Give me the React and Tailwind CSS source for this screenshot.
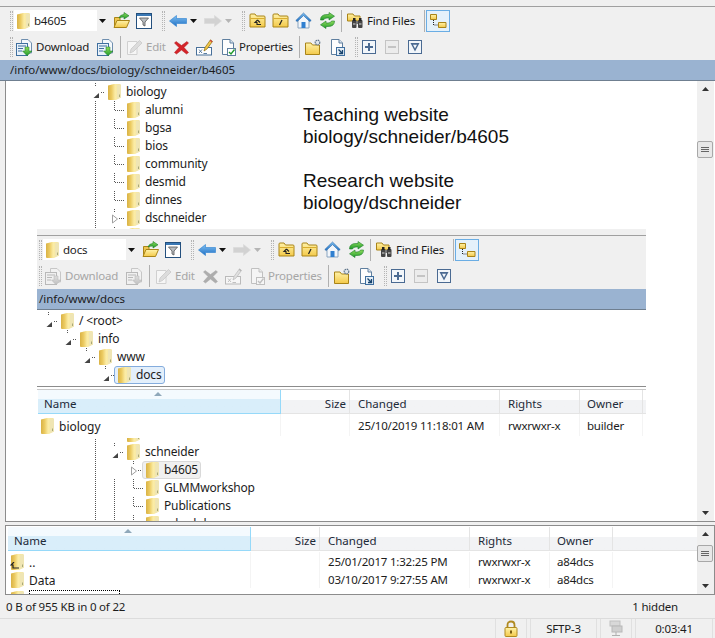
import React from 'react';

// shared gradients, referenced by url(#id) from the icons below
function Defs() {
  return (
    <svg className="absolute w-0 h-0">
      <defs>
        <linearGradient id="fld" x1="0" x2="1" y1="0" y2="0">
          <stop offset="0" stopColor="#d9b245" />
          <stop offset="0.28" stopColor="#eccb62" />
          <stop offset="0.55" stopColor="#fbeca6" />
          <stop offset="1" stopColor="#f3e3a0" />
        </linearGradient>
        <linearGradient id="ylw" x1="0" x2="0" y1="0" y2="1">
          <stop offset="0" stopColor="#fff2a8" />
          <stop offset="1" stopColor="#f3c94a" />
        </linearGradient>
        <linearGradient id="grn" x1="0" x2="0" y1="0" y2="1">
          <stop offset="0" stopColor="#8fdc5c" />
          <stop offset="1" stopColor="#1f9a2c" />
        </linearGradient>
        <linearGradient id="blu" x1="0" x2="0" y1="0" y2="1">
          <stop offset="0" stopColor="#7fc0f2" />
          <stop offset="1" stopColor="#1f6fc4" />
        </linearGradient>
      </defs>
    </svg>
  );
}

function Folder({ className = '' }) {
  return (
    <svg width="15" height="18" viewBox="0 0 15 18" className={'shrink-0 ' + className}>
      <path d="M1 2.5 L7 1 H12.5 Q14 1 14 2.5 V14 Q14 15 13 15 L9 17 H2 Q1 17 1 16 Z" fill="url(#fld)" />
      <path d="M10 2 V16 L14 14.5 V2.5 Q14 1.6 13 1.6 Z" fill="#efe5b4" />
      <path d="M12.5 11.5 v2.5" stroke="#a9a878" strokeWidth="1" />
    </svg>
  );
}

function Grip({ className = '' }) {
  return <div className={'w-[3px] h-[20px] shrink-0 border-x border-dotted border-[#b4b4b4] ' + className} />;
}

function Sep({ className = '' }) {
  return <div className={'w-px h-[22px] shrink-0 bg-[#b0b0b0] ' + className} />;
}

function Caret({ color = '#111', className = '' }) {
  return (
    <svg width="7" height="4" viewBox="0 0 7 4" className={'shrink-0 ' + className}>
      <path d="M0 0 H7 L3.5 4 Z" fill={color} />
    </svg>
  );
}

function Ico({ w = 17, h = 17, className = '', children }) {
  return (
    <svg width={w} height={h} viewBox={`0 0 ${w} ${h}`} className={'shrink-0 ' + className}>
      {children}
    </svg>
  );
}

const IconOpen = ({ className }) => (
  <Ico className={className}>
    <path d="M1.5 5.5 H7 V15.5 H1.5 Z" fill="#eec64e" stroke="#a98418" />
    <path d="M1 15.5 L4 8.5 H16.5 L13.5 15.5 Z" fill="url(#ylw)" stroke="#a98418" />
    <path d="M6 6 Q7 2.5 11 2.5 V0.5 L16 3.8 L11 7 V5 Q8 5 6 6 Z" fill="url(#grn)" stroke="#1b7d28" strokeWidth="0.6" />
  </Ico>
);

const IconFilter = ({ className }) => (
  <Ico h={16} w={16} className={className}>
    <rect x="0.5" y="0.5" width="15" height="15" fill="#fff" stroke="#24507e" />
    <rect x="1" y="1" width="14" height="2" fill="#3a78b4" />
    <path d="M3.5 5 H12.5 L9 9 V13 L7 12 V9 Z" fill="#b8bcc0" stroke="#555" strokeWidth="0.8" />
  </Ico>
);

const IconArrow = ({ dir = 'left', grey, className }) => (
  <Ico w={18} h={12} className={className}>
    <path
      d={dir === 'left' ? 'M0.5 6 L7.5 0.5 V3.5 H17.5 V8.5 H7.5 V11.5 Z' : 'M17.5 6 L10.5 0.5 V3.5 H0.5 V8.5 H10.5 V11.5 Z'}
      fill={grey ? '#d2d2d2' : 'url(#blu)'}
      stroke={grey ? '#d8d8d8' : '#2a7fd0'}
      strokeWidth="0.6"
    />
  </Ico>
);

const FolderBox = ({ children, className }) => (
  <Ico className={className}>
    <path d="M1 3 Q1 2 2 2 H6 L7.5 4 H15 Q16 4 16 5 V15 H1 Z" fill="url(#ylw)" stroke="#a98418" />
    <path d="M1.5 6.5 H15.5" stroke="#d9ad2e" strokeWidth="1" />
    {children}
  </Ico>
);

const IconFolderUp = ({ className }) => (
  <FolderBox className={className}>
    <path d="M8.5 8 L6 10.5 H8 V12.5 H12 M8.5 8 L11 10.5" fill="none" stroke="#222" strokeWidth="1.1" />
  </FolderBox>
);

const IconFolderRoot = ({ className }) => (
  <FolderBox className={className}>
    <path d="M10 8 L7.5 13" stroke="#222" strokeWidth="1.2" />
  </FolderBox>
);

const IconHome = ({ className }) => (
  <Ico className={className}>
    <path d="M3 8 V16 H14 V8 L8.5 3 Z" fill="#f2f6fb" stroke="#8aa5c0" />
    <rect x="6.5" y="10" width="4" height="6" fill="#2f7fd0" />
    <path d="M0.8 8.5 L8.5 1 L16.2 8.5 L14.8 9.6 L8.5 3.6 L2.2 9.6 Z" fill="url(#blu)" stroke="#2a6aa8" strokeWidth="0.6" />
  </Ico>
);

const IconRefresh = ({ className }) => (
  <Ico className={className}>
    <path d="M1.5 8 Q1.5 2.5 8 2.5 H10 V0.5 L15.5 4.2 L10 8 V6 H8 Q5 6 4.5 8 Z" fill="url(#grn)" stroke="#1b7d28" strokeWidth="0.6" />
    <path d="M15.5 9 Q15.5 14.5 9 14.5 H7 V16.5 L1.5 12.8 L7 9 V11 H9 Q12 11 12.5 9 Z" fill="url(#grn)" stroke="#1b7d28" strokeWidth="0.6" />
  </Ico>
);

const IconFind = ({ className }) => (
  <Ico className={className}>
    <path d="M0.5 2 H6 L7.5 4 H13 V9 H0.5 Z" fill="url(#ylw)" stroke="#a98418" />
    <rect x="5" y="8" width="4.5" height="8" rx="1" fill="#444" />
    <rect x="11" y="8" width="4.5" height="8" rx="1" fill="#444" />
    <rect x="6" y="6" width="2.5" height="3" fill="#222" />
    <rect x="12" y="6" width="2.5" height="3" fill="#222" />
    <rect x="9" y="9" width="2" height="3" fill="#777" />
    <path d="M6 12 h2.5 M12 12 h2.5" stroke="#ddd" strokeWidth="1" />
  </Ico>
);

const IconTreeToggle = () => (
  <div className="ml-px w-[24px] h-[22px] shrink-0 flex items-center justify-center border border-[#6aade4] bg-[#e4f1fb]">
    <Ico w={18} h={16}>
      <path d="M1.5 1.5 H7.5 V6.5 H1.5 Z" fill="url(#ylw)" stroke="#a98418" />
      <path d="M9.5 9.5 H17 V14.5 H9.5 Z" fill="url(#ylw)" stroke="#a98418" />
      <path d="M4.5 7 V12 H9" fill="none" stroke="#222" strokeDasharray="1 1" />
    </Ico>
  </div>
);

const Doc = ({ children, className }) => (
  <Ico className={className}>
    <path d="M3.5 0.5 H11 L14.5 4 V15.5 H3.5 Z" fill="#fdfdfd" stroke="#5f7f9f" />
    <path d="M11 0.5 V4 H14.5" fill="#dbe6f0" stroke="#5f7f9f" />
    {children}
  </Ico>
);

const IconDownload = ({ className }) => (
  <Ico className={className}>
    <path d="M5.5 0.5 H12 L15.5 4 V14 H5.5 Z" fill="#f4f8fc" stroke="#6f8faf" />
    <rect x="0.5" y="4.5" width="11" height="12" fill="#e9f2fa" stroke="#3f6f9f" />
    <path d="M2 7 H10 M2 9.5 H7 M2 12 H6" stroke="#3f6f9f" strokeWidth="1" />
    <path d="M9 8 H13 V12 H16 L11 16.8 L6.5 12 H9 Z" fill="url(#grn)" stroke="#1b7d28" strokeWidth="0.5" />
  </Ico>
);

const IconEdit = ({ className }) => (
  <Ico className={className}>
    <path d="M1.5 2.5 H11 V15.5 H1.5 Z" fill="#f6f6f6" stroke="#d0d0d0" />
    <path d="M4 14 L5 10 L13.5 1.5 L16 4 L7.5 12.5 Z" fill="#dcdcdc" stroke="#c4c4c4" strokeWidth="0.7" />
  </Ico>
);

const IconDelete = ({ className }) => (
  <Ico w={15} h={15} className={className}>
    <path d="M2 1.5 L7.5 5.5 L13 1.5 L14.5 3 L10 7.5 L14.5 12.5 L12.5 14 L7.5 10 L2.5 14 L0.5 12.5 L5 7.5 L0.5 3 Z" fill="#d4242a" stroke="#b01a1e" strokeWidth="0.5" />
  </Ico>
);

const IconRename = ({ className }) => (
  <Ico className={className}>
    <rect x="0.5" y="8.5" width="15" height="7.5" fill="#fff" stroke="#48709a" />
    <path d="M3 10.5 L6 14 M6 10.5 L3 14 M7.5 14.5 H11" stroke="#48709a" strokeWidth="0.9" />
    <path d="M8 12 L9 8.5 L14.5 0.8 L16.5 2.4 L11 10 Z" fill="#f3c94a" stroke="#8a6a10" strokeWidth="0.7" />
    <path d="M13.8 1.8 L15.8 3.4 L16.5 2.4 L14.5 0.8 Z" fill="#d04040" />
  </Ico>
);

const IconProps = ({ className }) => (
  <Doc className={className}>
    <rect x="8.5" y="9.5" width="8" height="7" fill="#fff" stroke="#5f7f9f" />
    <path d="M10 13 L12 15 L15.5 10.5" fill="none" stroke="#1f9a2c" strokeWidth="1.4" />
  </Doc>
);

const IconNewDir = ({ className }) => (
  <Ico className={className}>
    <path d="M0.5 4 H6 L7.5 6 H14.5 V15.5 H0.5 Z" fill="url(#ylw)" stroke="#a98418" />
    <circle cx="12.5" cy="3.5" r="2.3" fill="#dfe6ec" stroke="#61768a" strokeWidth="1.2" strokeDasharray="1.4 0.6" />
  </Ico>
);

const IconDocGo = ({ className }) => (
  <Doc className={className}>
    <rect x="8.5" y="8.5" width="8" height="8" fill="#e5eef6" stroke="#3f6f9f" />
    <path d="M10.5 10.5 L14.5 14.5 M14.5 11 V14.5 H11" fill="none" stroke="#16436e" strokeWidth="1.3" />
  </Doc>
);

function BoxIcon({ type, grey, className = '' }) {
  const c = grey ? '#c4c4c4' : '#4a6a92';
  return (
    <Ico w={14} h={14} className={className}>
      <rect x="0.5" y="0.5" width="13" height="13" fill={grey ? '#ececec' : '#f2f6fa'} stroke={c} />
      {type === 'plus' && <path d="M7 3 V11 M3 7 H11" stroke={c} strokeWidth="2" />}
      {type === 'minus' && <path d="M3 7 H11" stroke={c} strokeWidth="2" />}
      {type === 'down' && <path d="M2.5 3 H11.5 L7 11.5 Z M5 4.8 L7 8.6 L9 4.8 Z" fill={c} fillRule="evenodd" />}
    </Ico>
  );
}

function Label({ className = '', children }) {
  return <span className={'shrink-0 whitespace-nowrap text-[11.5px] tracking-[-0.2px] ' + className}>{children}</span>;
}

// the two toolbars and the path bar, used by the main window and the pasted one
function Header({ combo, path, off }) {
  const fade = off ? 'grayscale opacity-40' : '';
  const offText = off ? 'text-[#a6a6a6]' : '';
  return (
    <div className="bg-[#f0f0f0] pt-[6px]">
      <div className="border-t border-[#a0a0a0] h-[27px] flex items-center pl-[10px] pt-px">
        <Grip />
        <div className="ml-px w-[94px] h-[21px] bg-white flex items-center shrink-0">
          <Folder className="ml-[2px]" />
          <Label className="ml-[3px] flex-1 shrink">{combo}</Label>
          <div className="w-[11px] h-full bg-[#f0f0f0] flex items-center justify-center">
            <Caret />
          </div>
        </div>
        <IconOpen className="ml-[5px]" />
        <IconFilter className="ml-[6px]" />
        <Grip className="ml-[10px]" />
        <IconArrow className="ml-[4px]" />
        <Caret className="ml-[3px]" />
        <IconArrow dir="right" grey className="ml-[7px]" />
        <Caret color="#b5b5b5" className="ml-[3px]" />
        <Grip className="ml-[10px]" />
        <IconFolderUp className="ml-[4px]" />
        <IconFolderRoot className="ml-[6px]" />
        <IconHome className="ml-[6px]" />
        <IconRefresh className="ml-[7px]" />
        <Sep className="ml-[5px]" />
        <IconFind className="ml-[5px]" />
        <Label className="ml-[3px] w-[49px]">Find Files</Label>
        <Sep className="ml-[8px]" />
        <IconTreeToggle />
      </div>
      <div className="h-[27px] flex items-center pl-[10px] pt-px">
        <Grip />
        <IconDownload className={'ml-[3px] ' + fade} />
        <Label className={'ml-[3px] w-[54px] ' + offText}>Download</Label>
        <IconDownload className={'ml-[7px] ' + fade} />
        <Sep className="ml-[6px]" />
        <IconEdit className="ml-[5px]" />
        <Label className="ml-[3px] w-[20px] text-[#a6a6a6]">Edit</Label>
        <IconDelete className={'ml-[8px] ' + fade} />
        <IconRename className={'ml-[7px] ' + fade} />
        <IconProps className={'ml-[6px] ' + fade} />
        <Label className={'ml-[3px] w-[53px] ' + offText}>Properties</Label>
        <Sep className="ml-[7px]" />
        <IconNewDir className="ml-[5px]" />
        <IconDocGo className="ml-[6px]" />
        <Grip className="ml-[10px]" />
        <BoxIcon type="plus" className="ml-[4px]" />
        <BoxIcon type="minus" grey className="ml-[9px]" />
        <BoxIcon type="down" className="ml-[9px]" />
      </div>
      <div className="h-[21px] bg-[#9ab3d1] border-b border-[#6f7f90] pl-[10px] flex items-center text-[11.5px]">{path}</div>
    </div>
  );
}

// one 19x18 cell of tree lines: line = pass-through guide, mark = open/closed/dash
function TreeCell({ line, mark }) {
  return (
    <svg width="19" height="18" viewBox="0 0 19 18" className="shrink-0">
      {line && <path d="M9.5 0 V18" stroke="#555" strokeDasharray="1 1" />}
      {mark === 'dash' && <path d="M9.5 0 V9.5 H19" stroke="#555" strokeDasharray="1 1" fill="none" />}
      {mark === 'open' && (
        <>
          <path d="M9.5 0 V4" stroke="#555" strokeDasharray="1 1" />
          <path d="M13 10 V15 H7.5 Z" fill="#444" />
          <path d="M15 9.5 H19" stroke="#555" strokeDasharray="1 1" />
        </>
      )}
      {mark === 'closed' && (
        <>
          <path d="M9.5 0 V4" stroke="#555" strokeDasharray="1 1" />
          <path d="M7.5 6 L12.5 10 L7.5 14 Z" fill="#fff" stroke="#a0a0a0" />
          <path d="M14 9.5 H19" stroke="#555" strokeDasharray="1 1" />
        </>
      )}
    </svg>
  );
}

function TreeRow({ lines = [], mark, label, box }) {
  const boxCls = box === 'blue'
    ? 'border-[#84acdd] bg-[#e3effb]'
    : box === 'grey'
      ? 'border-[#d9d9d9] bg-[#f0f0f0]'
      : 'border-transparent';
  return (
    <div className="h-[18px] flex items-center">
      {lines.map((on, i) => (
        <TreeCell key={i} line={on} />
      ))}
      <TreeCell mark={mark} />
      <div className={'h-[18px] flex items-center pl-[2px] pr-[2px] -ml-px rounded-[3px] border ' + boxCls}>
        <Folder />
        {label && <span className="ml-[4px] whitespace-nowrap tracking-[-0.15px]">{label}</span>}
      </div>
    </div>
  );
}

const hiddenRows = Array.from({ length: 12 }, (_, i) => i);

function Tree() {
  return (
    <div className="pl-[80px] pt-[2px]">
      <TreeRow mark="open" label="biology" />
      {['alumni', 'bgsa', 'bios', 'community', 'desmid', 'dinnes'].map((n) => (
        <TreeRow key={n} lines={[true]} mark="dash" label={n} />
      ))}
      <TreeRow lines={[true]} mark="closed" label="dschneider" />
      {hiddenRows.map((i) => (
        <TreeRow key={i} lines={[true]} mark="dash" />
      ))}
      <TreeRow lines={[true]} mark="open" label="schneider" />
      <TreeRow lines={[true, false]} mark="closed" label="b4605" box="grey" />
      <TreeRow lines={[true, true]} mark="dash" label="GLMMworkshop" />
      <TreeRow lines={[true, true]} mark="dash" label="Publications" />
      <TreeRow lines={[true, true]} mark="dash" label="schedule" />
    </div>
  );
}

function Scrollbar({ thumbTop, className = '' }) {
  return (
    <div className={'w-[17px] shrink-0 bg-[#f0f0f0] flex flex-col items-center justify-between py-[6px] relative ' + className}>
      <Caret color="#333" className="rotate-180" />
      <div className={'absolute left-0 w-[16px] h-[17px] rounded-[2px] border border-[#a8a8a8] bg-[#e8e8e8] flex flex-col items-center justify-center gap-[1px] ' + thumbTop}>
        <div className="w-[8px] h-px bg-[#666]" />
        <div className="w-[8px] h-px bg-[#666]" />
        <div className="w-[8px] h-px bg-[#666]" />
      </div>
      <Caret color="#333" />
    </div>
  );
}

const gridCols = 'grid grid-cols-[243px_69px_150px_80px_63px_1fr]';

function ListHead() {
  const cell = 'h-[24px] border-r border-b border-r-[#e4e4e4] border-b-[#e4e4e4] bg-gradient-to-b from-white from-45% to-[#f2f3f5] to-45% flex items-center';
  return (
    <div className={gridCols + ' text-[#1d2a38] text-[11.5px]'}>
      <div className="h-[24px] relative border-r border-b border-[#96d9f9] bg-gradient-to-b from-[#f4fafe] from-40% to-[#d9eefa] to-40% flex items-center pl-[6px]">
        <span className="mt-[4px]">Name</span>
        <svg width="8" height="4" viewBox="0 0 8 4" className="absolute left-[116px] top-[2px]">
          <path d="M4 0 L8 4 H0 Z" fill="#8fa8ba" />
        </svg>
      </div>
      <div className={cell + ' justify-end pr-[3px]'}><span className="mt-[4px]">Size</span></div>
      <div className={cell + ' pl-[8px]'}><span className="mt-[4px]">Changed</span></div>
      <div className={cell + ' pl-[8px]'}><span className="mt-[4px]">Rights</span></div>
      <div className={cell + ' pl-[7px]'}><span className="mt-[4px]">Owner</span></div>
      <div className={cell + ' border-r-0'} />
    </div>
  );
}

function ListRow({ name, up, date, owner, h = 'h-[18px]' }) {
  const cell = h + ' border-r border-[#f4f4f4] flex items-center whitespace-nowrap pt-[2px]';
  return (
    <div className={gridCols + ' text-[11.5px] tracking-[-0.2px]'}>
      <div className={cell + ' pl-[2px] pt-0'}>
        <div className="relative shrink-0">
          <Folder />
          {up && (
            <svg width="9" height="8" viewBox="0 0 9 8" className="absolute left-0 bottom-[1px]">
              <path d="M4 0 L1 3 H3 V6 H9" fill="none" stroke="#222" strokeWidth="1.2" />
            </svg>
          )}
        </div>
        <span className="ml-[4px] mt-[2px] text-[12px] tracking-normal">{name}</span>
      </div>
      <div className={cell} />
      <div className={cell + ' pl-[8px]'}>{date}</div>
      <div className={cell + ' pl-[8px]'}>rwxrwxr-x</div>
      <div className={cell + ' pl-[7px]'}>{owner}</div>
      <div className={h} />
    </div>
  );
}

// the screenshot pasted over the tree in the reference
function PastedWindow() {
  return (
    <div className="absolute left-[31px] top-[148px] w-[609px] h-[209px] overflow-hidden bg-white">
      <div className="w-[715px] -ml-[8px]">
        <Header combo="docs" path="/info/www/docs" off />
      </div>
      <div className="h-[76px] pl-[2px] pt-[2px]">
        <TreeRow mark="open" label="/ <root>" />
        <TreeRow lines={[false]} mark="open" label="info" />
        <TreeRow lines={[false, false]} mark="open" label="www" />
        <TreeRow lines={[false, false, false]} mark="open" label="docs" box="blue" />
      </div>
      <div className="border-t border-[#8c8c8c] h-[3px] bg-white" />
      <div className="border-t border-[#c8c8c8] pl-px">
        <ListHead />
        <ListRow name="biology" date="25/10/2019 11:18:01 AM" owner="builder" h="h-[22px]" />
      </div>
    </div>
  );
}

export default function App() {
  return (
    <div className="w-[715px] h-[638px] overflow-hidden bg-[#f0f0f0] text-[12px] leading-[16px] text-[#1c1c1c] font-['Noto_Sans',sans-serif]">
      <Defs />
      <Header combo="b4605" path="/info/www/docs/biology/schneider/b4605" />

      <div className="h-[441px] ml-[5px] flex border-l border-b border-[#8c8c8c] bg-white relative overflow-hidden">
        <div className="flex-1 overflow-hidden">
          <Tree />
        </div>
        <Scrollbar thumbTop="top-[60px]" className="mr-px" />
        <div className="absolute left-[297px] top-[23px] text-[19px] leading-[22px] text-[#111] font-['Liberation_Sans',sans-serif]">
          <p>Teaching website</p>
          <p>biology/schneider/b4605</p>
          <p className="mt-[22px]">Research website</p>
          <p>biology/dschneider</p>
        </div>
        <PastedWindow />
      </div>

      <div className="mt-[3px] ml-[5px] h-[70px] flex border border-[#8c8c8c] bg-white pl-[2px] overflow-hidden">
        <div className="flex-1 overflow-hidden pt-px">
          <ListHead />
          <div className="pt-px">
            <ListRow name=".." up date="25/01/2017 1:32:25 PM" owner="a84dcs" />
            <ListRow name="Data" date="03/10/2017 9:27:55 AM" owner="a84dcs" />
            <div className="h-[18px] mt-[2px] flex items-start pl-[2px]">
              <Folder />
              <div className="ml-[4px] w-[91px] h-[18px] border border-dotted border-black" />
            </div>
          </div>
        </div>
        <Scrollbar thumbTop="top-[19px]" />
      </div>

      <div className="h-[23px] flex items-center justify-between pl-[6px] pr-[37px] text-[11.5px] tracking-[-0.2px]">
        <span>0 B of 955 KB in 0 of 22</span>
        <span>1 hidden</span>
      </div>
      <div className="h-[20px] border-t border-[#dcdcdc] flex justify-end pr-[2px] gap-[3px] text-[11.5px] tracking-[-0.2px]">
        <div className="w-[32px] border-x border-[#e0e0e0] flex items-center justify-center">
          <svg width="14" height="17" viewBox="0 0 14 17">
            <path d="M3.5 8 V5 Q3.5 1.5 7 1.5 Q10.5 1.5 10.5 5 V8" fill="none" stroke="#b08a20" strokeWidth="1.8" />
            <rect x="1" y="7.5" width="12" height="9" rx="1" fill="url(#ylw)" stroke="#b08a20" />
            <rect x="6" y="10.5" width="2" height="3" fill="#7a5d10" />
          </svg>
        </div>
        <div className="w-[67px] border-x border-[#e0e0e0] flex items-center justify-center">SFTP-3</div>
        <div className="w-[32px] border-x border-[#e0e0e0] flex items-center justify-center">
          <svg width="14" height="17" viewBox="0 0 14 17">
            <rect x="1" y="1" width="10" height="5" fill="#d8d8d8" stroke="#c0c0c0" />
            <rect x="3" y="6" width="10" height="6" fill="#cfcfcf" stroke="#b8b8b8" />
            <path d="M7 12 V15 M3 15.5 H11" stroke="#b0b0b0" />
          </svg>
        </div>
        <div className="w-[78px] border-x border-[#e0e0e0] flex items-center justify-center">0:03:41</div>
      </div>
    </div>
  );
}
